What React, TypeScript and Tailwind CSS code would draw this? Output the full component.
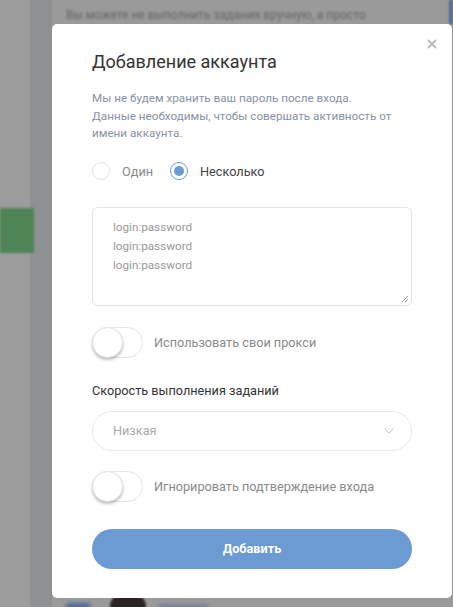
import { ChevronDown, X } from "lucide-react";

function Toggle({ label }: { label: string }) {
  return (
    <div className="flex items-center gap-[11px]">
      <div className="relative h-[31px] w-[51px] rounded-full border border-[#e6e6ea] bg-white">
        <div className="absolute left-[-1px] top-[-1px] h-[31px] w-[31px] rounded-full border border-[#e2e2e2] bg-white shadow-[0_2px_3px_rgba(0,0,0,0.25)]" />
      </div>
      <span className="text-[12.7px] text-[#8a8a8a]">{label}</span>
    </div>
  );
}

export default function App() {
  return (
    <div className="relative h-[607px] w-[453px] overflow-hidden bg-[#9b9b9b] font-['Roboto',sans-serif]">
      {/* Blurred page behind the overlay */}
      <div className="flex h-full">
        <div className="w-[30px] bg-[#9c9c9c]" />
        <div className="w-[22px] bg-[#8f9094]" />
        <div className="flex-1 bg-[#9a9a9a]" />
      </div>
      <div className="absolute left-[66px] top-[6px] text-[12px] text-[#666] blur-[1.2px]">
        Вы можете не выполнить задания вручную, а просто
      </div>
      <div className="absolute left-0 top-[208px] h-[45px] w-[34px] bg-[#4f8457] blur-[1px]" />
      <div className="absolute right-0 top-0 h-[24px] w-[4px] bg-[#4f6a94] blur-[1px]" />
      <div className="absolute bottom-[-6px] left-[66px] h-[10px] w-[24px] bg-[#4d6b99] blur-[2px]" />
      <div className="absolute bottom-[-14px] left-[110px] h-[28px] w-[36px] rounded-full bg-[#2b2422] blur-[1px]" />
      <div className="absolute bottom-[-4px] left-[158px] h-[6px] w-[50px] bg-[#6b7896] blur-[2px]" />

      {/* Modal */}
      <div className="absolute left-[52px] top-[24px] h-[574px] w-[400px] rounded-[5px] bg-white px-[40px] pt-[27px]">
        <X className="absolute right-[13px] top-[13px] h-[14px] w-[14px] text-[#bdbdbd]" strokeWidth={3.2} />
        <h2 className="text-[18px] font-normal leading-[22px] text-[#333]">Добавление аккаунта</h2>
        <p className="mt-[17px] text-[11.7px] leading-[17.5px] text-[#8891a6]">
          Мы не будем хранить ваш пароль после входа.
          <br />
          Данные необходимы, чтобы совершать активность от
          <br />
          имени аккаунта.
        </p>

        <div className="mt-[19px] flex items-center text-[12.7px]">
          <div className="h-[18px] w-[18px] rounded-full border border-[#e4e4e8]" />
          <span className="ml-[12px] text-[#8a8a8a]">Один</span>
          <div className="ml-[17px] flex h-[18px] w-[18px] items-center justify-center rounded-full border border-[#6b9bd2]">
            <div className="h-[10px] w-[10px] rounded-full bg-[#6b9bd2]" />
          </div>
          <span className="ml-[12px] text-[#444]">Несколько</span>
        </div>

        <div className="relative mt-[26px] h-[99px] w-[320px] rounded-[6px] border border-[#e3e3ea] px-[20px] pt-[10px] text-[11.7px] leading-[19px] text-[#999]">
          <div>login:password</div>
          <div>login:password</div>
          <div>login:password</div>
          <svg className="absolute bottom-[2px] right-[2px]" width="8" height="8" viewBox="0 0 8 8">
            <path d="M7 1L1 7M7 4L4 7" stroke="#999" strokeWidth="1" />
          </svg>
        </div>

        <div className="mt-[21px]">
          <Toggle label="Использовать свои прокси" />
        </div>

        <div className="mt-[23px] text-[12.7px] text-[#333]">Скорость выполнения заданий</div>

        <div className="mt-[11px] flex h-[40px] w-[320px] items-center justify-between rounded-full border border-[#e8e8ee] pl-[20px] pr-[14px]">
          <span className="text-[12.7px] text-[#aaa]">Низкая</span>
          <ChevronDown className="h-[16px] w-[16px] text-[#c4c4c4]" strokeWidth={1.5} />
        </div>

        <div className="mt-[20px]">
          <Toggle label="Игнорировать подтверждение входа" />
        </div>

        <button className="mt-[27px] flex h-[40px] w-[320px] items-center justify-center rounded-full bg-[#6b9bd2] text-[12.7px] font-bold text-white">
          Добавить
        </button>
      </div>
    </div>
  );
}
